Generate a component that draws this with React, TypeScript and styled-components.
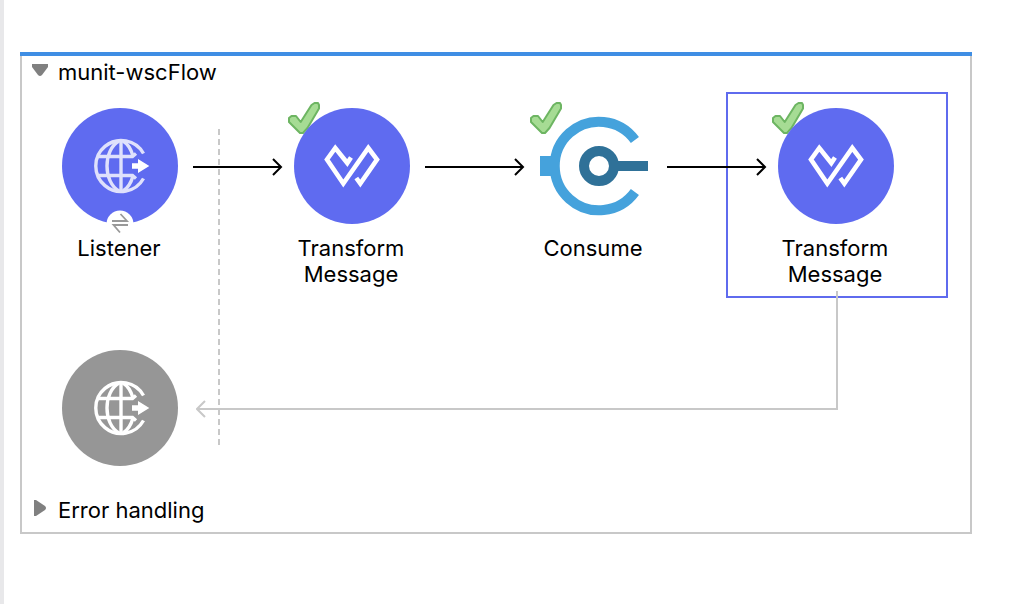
import React from "react";
import styled, { createGlobalStyle } from "styled-components";

const GlobalStyle = createGlobalStyle`
  * { box-sizing: border-box; }
  body {
    margin: 0;
    background: #fff;
    color: #000;
    font-family: Inter, "Liberation Sans", sans-serif;
    font-size: 22px;
    line-height: 26px;
  }
`;

const Page = styled.main`
  min-height: 100vh;
  padding: 52px 40px 40px 16px;
  border-left: 4px solid #e8e8ea;
`;

const FlowPanel = styled.section`
  border-top: 4px solid #3f8ee4;
`;

const PanelBody = styled.div`
  padding-bottom: 6px;
  border: 2px solid #c8c8c8;
  border-top: 0;
`;

const SectionToggle = styled.button`
  display: flex;
  align-items: center;
  gap: 10px;
  width: 100%;
  height: 32px;
  padding: 0 10px;
  border: 0;
  background: none;
  color: inherit;
  font: inherit;
  text-align: left;
  cursor: pointer;
`;

const Marker = styled.svg`
  flex: none;
  width: 16px;
  height: 20px;
  fill: #808080;
`;

const Canvas = styled.div`
  position: relative;
  height: 406px;
  padding: 20px 40px 0;
`;

const Row = styled.div`
  display: flex;
  align-items: flex-start;
  height: 242px;
`;

const Node = styled.div`
  position: relative;
  flex: none;
  width: 116px;
  text-align: center;
`;

const Disc = styled.div<{ $color?: string }>`
  position: relative;
  height: 116px;
  border-radius: 50%;
  background: ${(p) => p.$color ?? "transparent"};
`;

const Glyph = styled.svg`
  display: block;
  width: 116px;
  height: 116px;
  overflow: visible;
`;

const Label = styled.div`
  margin-top: 11px;
  padding-right: 2px;
`;

const Check = styled.svg`
  position: absolute;
  top: -6px;
  left: -6px;
  width: 32px;
  height: 32px;
`;

const Selection = styled.div`
  position: absolute;
  inset: -16px -54px auto -52px;
  height: 206px;
  border: 2px solid #5f6bee;
`;

const Connector = styled.svg<{ $width: number }>`
  position: relative;
  z-index: 1;
  flex: none;
  width: ${(p) => p.$width}px;
  height: 116px;
  fill: none;
  stroke: #000;
  stroke-width: 2;
`;

const SourceDivider = styled.svg`
  position: absolute;
  top: 41px;
  left: 196px;
  width: 2px;
  height: 316px;
`;

const ReturnPath = styled.svg`
  position: absolute;
  top: 203px;
  left: 174px;
  width: 644px;
  height: 128px;
  fill: none;
  stroke: #c8c8c8;
  stroke-width: 2;
`;

function GlobeGlyph({ line }: { line: string }) {
  return (
    <Glyph viewBox="0 0 116 116" aria-hidden="true">
      <g fill="none" stroke={line} strokeWidth="3.4">
        <path d="M81.5 45.5A25.5 25.5 0 1 0 81.500 70.500" />
        <path d="M59 32V84" />
        <path d="M35 48.500H70.500L74 45.500M35 67.500H70.500L74 70.500" />
        <path d="M57 33C41 42 41 74 57 83M61 33C66 36 69 41 71 48M61 83C66 80 69 75 71 68" />
      </g>
      <path d="M70 55.300H76V51L87.300 58L76 65V60.700H70Z" fill="#fff" />
    </Glyph>
  );
}

function ExchangeBadge() {
  return (
    <g>
      <circle cx="58" cy="116" r="13.500" fill="#fff" />
      <path
        d="M50 113H65L58.500 106M66 117H51.500L58 124.500"
        fill="none"
        stroke="#999"
        strokeWidth="1.800"
      />
    </g>
  );
}

function TransformGlyph() {
  return (
    <Glyph viewBox="0 0 116 116" aria-hidden="true">
      <path
        d="M57 49.500L53.300 55L41.300 40L33 51.500L49.300 75.500L74.300 40L83 51.500L66.300 75.500L62.300 70"
        fill="none"
        stroke="#fff"
        strokeWidth="4.600"
        strokeMiterlimit="8"
      />
    </Glyph>
  );
}

function ConsumeGlyph() {
  return (
    <Glyph viewBox="0 0 116 116" aria-hidden="true">
      <path d="M98.900 32A44.300 44.300 0 1 0 98.900 84" fill="none" stroke="#45a2dc" strokeWidth="10" />
      <rect x="4" y="48" width="15" height="20" fill="#45a2dc" />
      <circle cx="63" cy="58" r="15" fill="none" stroke="#2f7198" strokeWidth="10" />
      <rect x="80" y="53" width="32" height="10" fill="#2f7198" />
    </Glyph>
  );
}

function CheckMark() {
  return (
    <Check viewBox="0 0 32 32" role="img" aria-label="Passed">
      <path
        d="M1 16L3.500 14H8L12.700 20L23.500 3L26.500 1H30L31 3V6.500L19.500 26L15 31H12L1 20Z"
        fill="#a6dc94"
        stroke="#6db562"
        strokeWidth="2"
        strokeLinejoin="round"
      />
    </Check>
  );
}

function Arrow({ width }: { width: number }) {
  const tip = width - 13;
  return (
    <Connector $width={width} viewBox={`0 0 ${width} 116`} aria-hidden="true">
      <path d={`M15 59H${tip}M${tip - 8} 51L${tip} 59L${tip - 8} 67`} />
    </Connector>
  );
}

export default function App() {
  return (
    <>
      <GlobalStyle />
      <Page>
        <FlowPanel>
          <PanelBody>
            <SectionToggle aria-expanded="true">
              <Marker viewBox="0 0 16 20"><path d="M0 2H16V5L10 13Q8 15 6 13L0 5Z" /></Marker>
              munit-wscFlow
            </SectionToggle>
            <Canvas>
              <Row>
                <Node>
                  <Disc $color="#5f6bf0">
                    <GlobeGlyph line="#dfe1fc" />
                  </Disc>
                  <Badge viewBox="0 0 116 116" aria-hidden="true"><ExchangeBadge /></Badge>
                  <Label>Listener</Label>
                </Node>
                <Arrow width={116} />
                <Node>
                  <CheckMark />
                  <Disc $color="#5f6bf0"><TransformGlyph /></Disc>
                  <Label>Transform Message</Label>
                </Node>
                <Arrow width={126} />
                <Node>
                  <CheckMark />
                  <Disc><ConsumeGlyph /></Disc>
                  <Label>Consume</Label>
                </Node>
                <Arrow width={126} />
                <Node>
                  <Selection />
                  <CheckMark />
                  <Disc $color="#5f6bf0"><TransformGlyph /></Disc>
                  <Label>Transform Message</Label>
                </Node>
              </Row>
              <Node>
                <Disc $color="#969696"><GlobeGlyph line="#fff" /></Disc>
              </Node>
              <SourceDivider viewBox="0 0 2 316" aria-hidden="true">
                <path d="M1 0V316" stroke="#c8c8c8" strokeWidth="2" strokeDasharray="6 4" />
              </SourceDivider>
              <ReturnPath viewBox="0 0 644 128" aria-hidden="true">
                <path d="M641 0V118H1M9 110L1 118L9 126" />
              </ReturnPath>
            </Canvas>
            <SectionToggle aria-expanded="false">
              <Marker viewBox="0 0 16 20"><path d="M2 0H4L13 6Q15 8 13 10L4 16H2Z" /></Marker>
              Error handling
            </SectionToggle>
          </PanelBody>
        </FlowPanel>
      </Page>
    </>
  );
}

const Badge = styled(Glyph)`
  position: absolute;
  top: 0;
  left: 0;
`;
